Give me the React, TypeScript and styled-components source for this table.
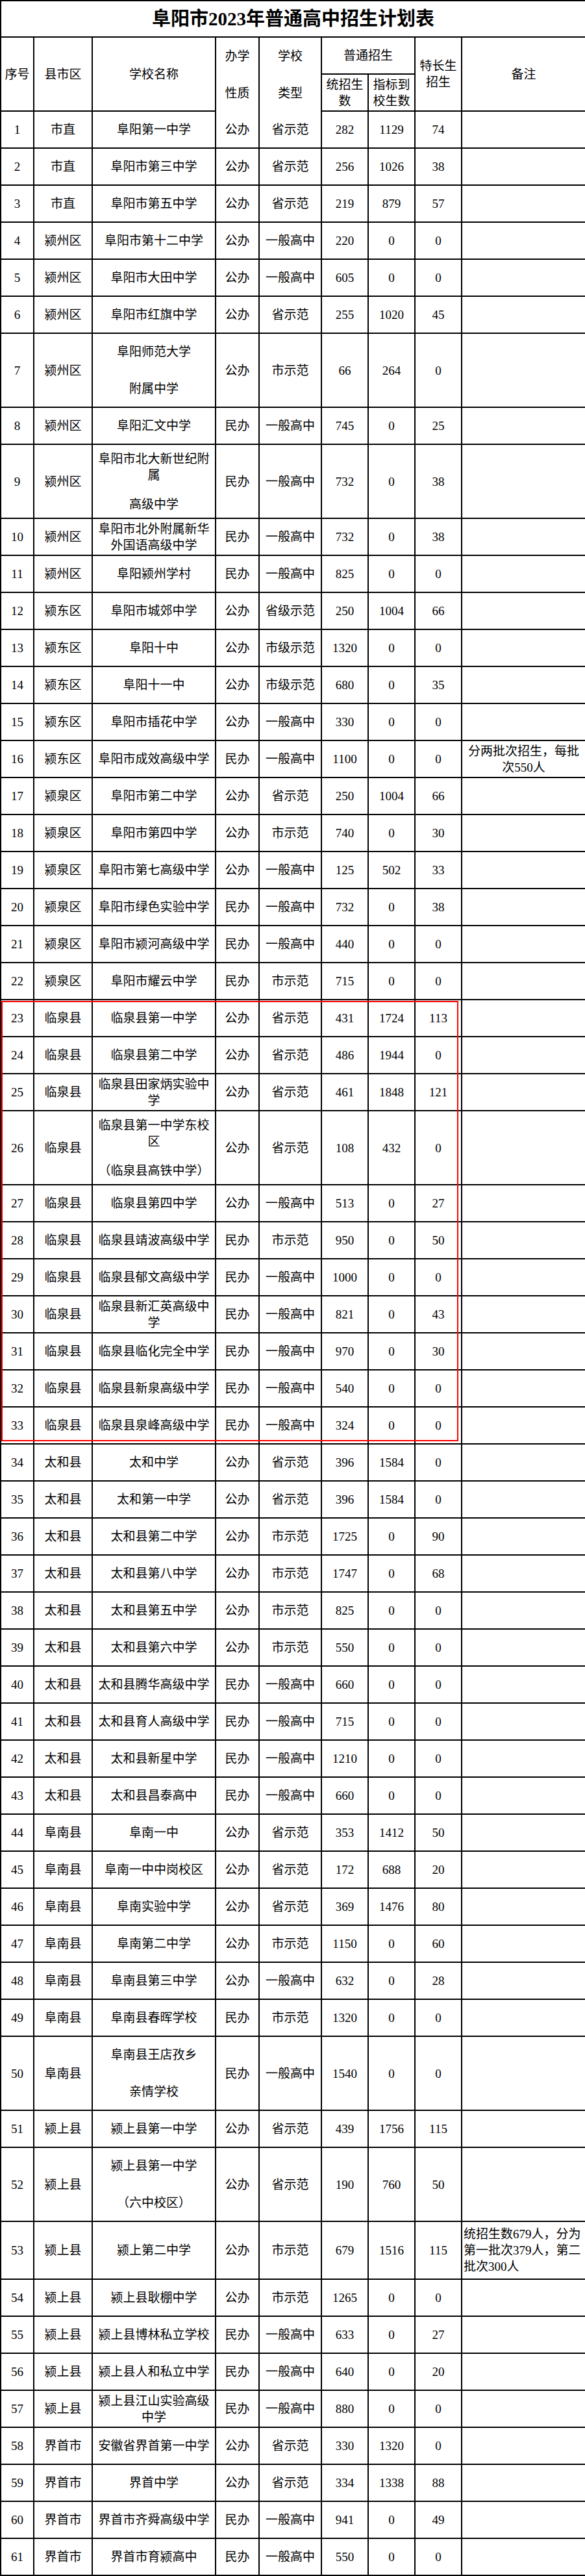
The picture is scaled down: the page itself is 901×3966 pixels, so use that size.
import React from 'react';
import styled, { createGlobalStyle } from 'styled-components';

const GlobalStyle = createGlobalStyle`
  html, body {
    margin: 0;
    padding: 0;
    background: #fff;
  }
  body {
    font-family: "Liberation Serif", "Noto Sans CJK SC", serif;
    color: #000;
  }
`;

const Page = styled.div`
  position: relative;
  width: 901px;
`;

const Table = styled.table`
  width: 901px;
  table-layout: fixed;
  border-collapse: collapse;
  font-size: 19px;
  line-height: 25px;
`;

const Row = styled.tr<{ $h: number }>`
  height: ${p => p.$h}px;
`;

const Cell = styled.td<{ $open?: 'top' | 'bottom'; $align?: 'left' | 'center' }>`
  border: 2px solid #000;
  padding: 0 2px;
  font-weight: normal;
  text-align: ${p => p.$align ?? 'center'};
  vertical-align: middle;
  white-space: nowrap;
  ${p => p.$open === 'bottom' && 'border-bottom-style: hidden;'}
  ${p => p.$open === 'top' && 'border-top-style: hidden;'}
`;

const Title = styled.th`
  border: 2px solid #000;
  font-size: 29px;
  font-weight: bold;
  line-height: 1;
  text-align: center;
  vertical-align: middle;
`;

const Line = styled.span<{ $gap?: number }>`
  display: block;
  margin-top: ${p => p.$gap ?? 0}px;
`;

const Highlight = styled.div`
  position: absolute;
  left: 2px;
  top: 1541px;
  width: 704px;
  height: 678px;
  box-sizing: border-box;
  border: 2px solid #f00;
  pointer-events: none;
`;

type School = {
  no: number;
  area: string;
  name: string[];
  gap?: number;
  kind: string;
  level: string;
  quota: number;
  assigned: number;
  special: number;
  note?: string[];
  noteAlign?: 'left' | 'center';
  h?: number;
};

const s = (
  no: number,
  area: string,
  name: string,
  kind: string,
  level: string,
  quota: number,
  assigned: number,
  special: number,
  extra: Partial<School> = {}
): School => ({
  no,
  area,
  name: name.split('|'),
  kind,
  level,
  quota,
  assigned,
  special,
  ...extra,
});

const rows: School[] = [
  s(1, '市直', '阜阳第一中学', '公办', '省示范', 282, 1129, 74),
  s(2, '市直', '阜阳市第三中学', '公办', '省示范', 256, 1026, 38),
  s(3, '市直', '阜阳市第五中学', '公办', '省示范', 219, 879, 57),
  s(4, '颍州区', '阜阳市第十二中学', '公办', '一般高中', 220, 0, 0),
  s(5, '颍州区', '阜阳市大田中学', '公办', '一般高中', 605, 0, 0),
  s(6, '颍州区', '阜阳市红旗中学', '公办', '省示范', 255, 1020, 45),
  s(7, '颍州区', '阜阳师范大学|附属中学', '公办', '市示范', 66, 264, 0, { gap: 32, h: 114 }),
  s(8, '颍州区', '阜阳汇文中学', '民办', '一般高中', 745, 0, 25),
  s(9, '颍州区', '阜阳市北大新世纪附|属|高级中学', '民办', '一般高中', 732, 0, 38, { gap: 20, h: 114 }),
  s(10, '颍州区', '阜阳市北外附属新华|外国语高级中学', '民办', '一般高中', 732, 0, 38),
  s(11, '颍州区', '阜阳颍州学村', '民办', '一般高中', 825, 0, 0),
  s(12, '颍东区', '阜阳市城郊中学', '公办', '省级示范', 250, 1004, 66),
  s(13, '颍东区', '阜阳十中', '公办', '市级示范', 1320, 0, 0),
  s(14, '颍东区', '阜阳十一中', '公办', '市级示范', 680, 0, 35),
  s(15, '颍东区', '阜阳市插花中学', '公办', '一般高中', 330, 0, 0),
  s(16, '颍东区', '阜阳市成效高级中学', '民办', '一般高中', 1100, 0, 0, {
    note: ['分两批次招生，每批', '次550人'],
  }),
  s(17, '颍泉区', '阜阳市第二中学', '公办', '省示范', 250, 1004, 66),
  s(18, '颍泉区', '阜阳市第四中学', '公办', '市示范', 740, 0, 30),
  s(19, '颍泉区', '阜阳市第七高级中学', '公办', '一般高中', 125, 502, 33),
  s(20, '颍泉区', '阜阳市绿色实验中学', '民办', '一般高中', 732, 0, 38),
  s(21, '颍泉区', '阜阳市颍河高级中学', '民办', '一般高中', 440, 0, 0),
  s(22, '颍泉区', '阜阳市耀云中学', '民办', '市示范', 715, 0, 0),
  s(23, '临泉县', '临泉县第一中学', '公办', '省示范', 431, 1724, 113),
  s(24, '临泉县', '临泉县第二中学', '公办', '省示范', 486, 1944, 0),
  s(25, '临泉县', '临泉县田家炳实验中|学', '公办', '省示范', 461, 1848, 121),
  s(26, '临泉县', '临泉县第一中学东校|区|（临泉县高铁中学）', '公办', '省示范', 108, 432, 0, { gap: 20, h: 114 }),
  s(27, '临泉县', '临泉县第四中学', '公办', '一般高中', 513, 0, 27),
  s(28, '临泉县', '临泉县靖波高级中学', '民办', '市示范', 950, 0, 50),
  s(29, '临泉县', '临泉县郁文高级中学', '民办', '一般高中', 1000, 0, 0),
  s(30, '临泉县', '临泉县新汇英高级中|学', '民办', '一般高中', 821, 0, 43),
  s(31, '临泉县', '临泉县临化完全中学', '民办', '一般高中', 970, 0, 30),
  s(32, '临泉县', '临泉县新泉高级中学', '民办', '一般高中', 540, 0, 0),
  s(33, '临泉县', '临泉县泉峰高级中学', '民办', '一般高中', 324, 0, 0),
  s(34, '太和县', '太和中学', '公办', '省示范', 396, 1584, 0),
  s(35, '太和县', '太和第一中学', '公办', '省示范', 396, 1584, 0),
  s(36, '太和县', '太和县第二中学', '公办', '市示范', 1725, 0, 90),
  s(37, '太和县', '太和县第八中学', '公办', '市示范', 1747, 0, 68),
  s(38, '太和县', '太和县第五中学', '公办', '市示范', 825, 0, 0),
  s(39, '太和县', '太和县第六中学', '公办', '市示范', 550, 0, 0),
  s(40, '太和县', '太和县腾华高级中学', '民办', '一般高中', 660, 0, 0),
  s(41, '太和县', '太和县育人高级中学', '民办', '一般高中', 715, 0, 0),
  s(42, '太和县', '太和县新星中学', '民办', '一般高中', 1210, 0, 0),
  s(43, '太和县', '太和县昌泰高中', '民办', '一般高中', 660, 0, 0),
  s(44, '阜南县', '阜南一中', '公办', '省示范', 353, 1412, 50),
  s(45, '阜南县', '阜南一中中岗校区', '公办', '省示范', 172, 688, 20),
  s(46, '阜南县', '阜南实验中学', '公办', '省示范', 369, 1476, 80),
  s(47, '阜南县', '阜南第二中学', '公办', '市示范', 1150, 0, 60),
  s(48, '阜南县', '阜南县第三中学', '公办', '一般高中', 632, 0, 28),
  s(49, '阜南县', '阜南县春晖学校', '民办', '市示范', 1320, 0, 0),
  s(50, '阜南县', '阜南县王店孜乡|亲情学校', '民办', '一般高中', 1540, 0, 0, { gap: 32, h: 114 }),
  s(51, '颍上县', '颍上县第一中学', '公办', '省示范', 439, 1756, 115),
  s(52, '颍上县', '颍上县第一中学|（六中校区）', '公办', '省示范', 190, 760, 50, { gap: 32, h: 114 }),
  s(53, '颍上县', '颍上第二中学', '公办', '市示范', 679, 1516, 115, {
    note: ['统招生数679人，分为', '第一批次379人，第二', '批次300人'],
    noteAlign: 'left',
    h: 89,
  }),
  s(54, '颍上县', '颍上县耿棚中学', '公办', '市示范', 1265, 0, 0),
  s(55, '颍上县', '颍上县博林私立学校', '民办', '一般高中', 633, 0, 27),
  s(56, '颍上县', '颍上县人和私立中学', '民办', '一般高中', 640, 0, 20),
  s(57, '颍上县', '颍上县江山实验高级|中学', '民办', '一般高中', 880, 0, 0),
  s(58, '界首市', '安徽省界首第一中学', '公办', '省示范', 330, 1320, 0),
  s(59, '界首市', '界首中学', '公办', '省示范', 334, 1338, 88),
  s(60, '界首市', '界首市齐舜高级中学', '民办', '一般高中', 941, 0, 49),
  s(61, '界首市', '界首市育颍高中', '民办', '一般高中', 550, 0, 0),
];

const widths = [51, 90, 190, 67, 96, 72, 72, 72, 191];

const Lines: React.FC<{ lines: string[]; gap?: number }> = ({ lines, gap = 0 }) => (
  <>
    {lines.map((text, i) => (
      <Line key={i} $gap={i > 0 && i === lines.length - 1 ? gap : 0}>
        {text}
      </Line>
    ))}
  </>
);

const App: React.FC = () => (
  <Page>
    <GlobalStyle />
    <Table>
      <colgroup>
        {widths.map((w, i) => (
          <col key={i} style={{ width: w }} />
        ))}
      </colgroup>
      <thead>
        <Row $h={56}>
          <Title colSpan={9}>阜阳市2023年普通高中招生计划表</Title>
        </Row>
        <Row $h={57}>
          <Cell as="th" rowSpan={2}>序号</Cell>
          <Cell as="th" rowSpan={2}>县市区</Cell>
          <Cell as="th" rowSpan={2}>学校名称</Cell>
          <Cell as="th" rowSpan={2} $open="bottom">
            <Lines lines={['办学', '性质']} gap={32} />
          </Cell>
          <Cell as="th" rowSpan={2} $open="bottom">
            <Lines lines={['学校', '类型']} gap={32} />
          </Cell>
          <Cell as="th" colSpan={2}>普通招生</Cell>
          <Cell as="th" rowSpan={2}>
            <Lines lines={['特长生', '招生']} />
          </Cell>
          <Cell as="th" rowSpan={2}>备注</Cell>
        </Row>
        <Row $h={57}>
          <Cell as="th">
            <Lines lines={['统招生', '数']} />
          </Cell>
          <Cell as="th">
            <Lines lines={['指标到', '校生数']} />
          </Cell>
        </Row>
      </thead>
      <tbody>
        {rows.map(r => (
          <Row key={r.no} $h={r.h ?? 57}>
            <Cell>{r.no}</Cell>
            <Cell>{r.area}</Cell>
            <Cell>
              <Lines lines={r.name} gap={r.gap} />
            </Cell>
            <Cell $open={r.no === 1 ? 'top' : undefined}>{r.kind}</Cell>
            <Cell $open={r.no === 1 ? 'top' : undefined}>{r.level}</Cell>
            <Cell>{r.quota}</Cell>
            <Cell>{r.assigned}</Cell>
            <Cell>{r.special}</Cell>
            <Cell $align={r.noteAlign}>{r.note && <Lines lines={r.note} />}</Cell>
          </Row>
        ))}
      </tbody>
    </Table>
    <Highlight />
  </Page>
);

export default App;
